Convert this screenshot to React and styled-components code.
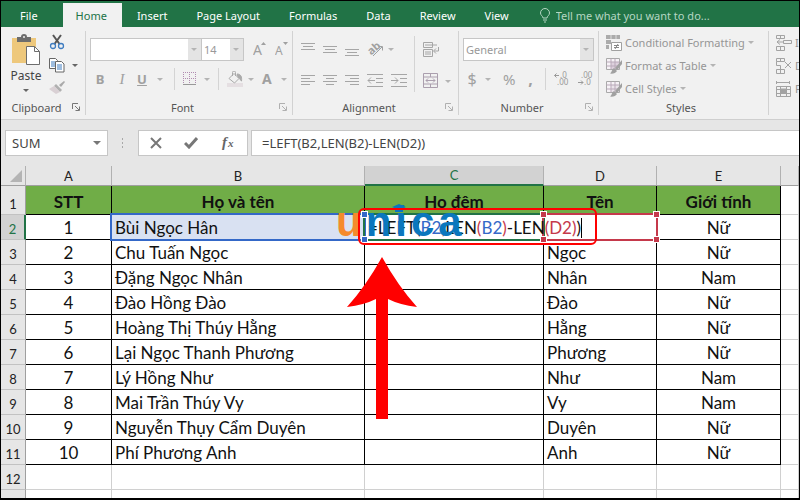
import React from 'react'
import styled, { createGlobalStyle, css } from 'styled-components'

const GlobalStyle = createGlobalStyle`
  * {
    box-sizing: border-box;
  }
  body {
    margin: 0;
  }
`;

const uiFont = `'Noto Sans', 'Open Sans', sans-serif`;
const cellFont = `Lato, 'Open Sans', sans-serif`;

const Frame = styled.div`
  height: 100vh;
  display: flex;
  flex-direction: column;
  overflow: hidden;
  border: 1px solid #000;
  border-bottom-width: 2px;
  background: #e6e6e6;
  font-family: ${uiFont};
  font-size: 11px;
  color: #444;

  button, input, select {
    font: inherit;
    color: inherit;
    margin: 0;
    padding: 0;
    border: none;
    background: none;
  }
  svg {
    display: block;
  }
`;

const TabBar = styled.nav`
  display: flex;
  align-items: flex-end;
  flex: none;
  height: 26px;
  background: #217346;
  white-space: nowrap;
  overflow: hidden;
`;

const Tab = styled.button`
  && {
    height: 24px;
    padding: ${p => p.$pad || '0 14px 0 15px'};
    color: ${p => (p.$active ? '#217346' : '#fff')};
    background: ${p => (p.$active ? '#f1f1f1' : 'transparent')};
  }
`;

const TellMe = styled.label`
  display: flex;
  align-items: center;
  gap: 5px;
  flex: 1;
  height: 24px;
  margin-left: 16px;
  color: #b5d6c3;

  input {
    flex: 1;
    min-width: 0;
  }
  input::placeholder {
    color: #b5d6c3;
    opacity: 1;
  }
`;

const Ribbon = styled.div`
  display: flex;
  flex: none;
  height: 93px;
  background: #f1f1f1;
  border-bottom: 1px solid #cfcfcf;
  overflow: hidden;
`;

const Group = styled.section`
  display: flex;
  flex-direction: column;
  flex: none;
  width: ${p => p.$width};
  margin: 4px 0;
  border-right: 1px solid #d2d2d2;
`;

const GroupBody = styled.div`
  flex: 1;
  display: flex;
  flex-direction: ${p => (p.$row ? 'row' : 'column')};
  gap: ${p => p.$gap || '0'};
  padding: ${p => p.$pad || '0'};
`;

const GroupFooter = styled.div`
  display: flex;
  align-items: center;
  height: 16px;
  padding-right: 5px;
  color: #555;

  span {
    flex: 1;
    text-align: center;
  }
`;

const Tools = styled.div`
  display: flex;
  align-items: center;
  gap: ${p => p.$gap || '8px'};
  height: ${p => p.$height || '24px'};
  color: #a6a6a6;
`;

const ToolButton = styled.button`
  && {
    display: flex;
    align-items: center;
    justify-content: center;
    gap: ${p => p.$gap || '5px'};
    flex: none;
    width: ${p => p.$width || 'auto'};
    color: #a0a0a0;
    white-space: nowrap;
  }
`;

const Letter = styled.span`
  min-width: ${p => p.$min || '0'};
  font-family: ${p => (p.$italic ? `'Liberation Serif', serif` : uiFont)};
  font-size: ${p => p.$size || '13px'};
  line-height: 18px;
  font-weight: ${p => (p.$bold ? 700 : 400)};
  font-style: ${p => (p.$italic ? 'italic' : 'normal')};
  text-decoration: ${p => (p.$underline ? 'underline' : 'none')};
`;

const Separator = styled.i`
  width: 1px;
  height: ${p => p.$height || '22px'};
  background: #d4d4d4;
`;

const Caret = styled.i`
  flex: none;
  border: solid transparent;
  border-width: 3px 3px 0;
  border-top-color: ${p => p.$color || '#b4b4b4'};
`;

const BigCaret = styled(Caret)`
  border-width: 4px 4px 0;
`;

const SelectBox = styled.span`
  position: relative;
  display: flex;
  width: ${p => p.$width};
  height: 23px;
  border: 1px solid #c6c6c6;
  background: #fff;

  & + & {
    margin-left: -1px;
  }
  && select {
    flex: 1;
    min-width: 0;
    appearance: none;
    padding: 0 16px 0 2px;
    color: #999;
    background: linear-gradient(#e4e4e4, #e4e4e4) right / 13px 100% no-repeat;
  }
  ${Caret} {
    position: absolute;
    right: 4px;
    top: 9px;
  }
`;

const FontSizeTools = styled.div`
  display: flex;
  gap: 8px;
  padding-left: 9px;
`;

const PasteButton = styled.button`
  && {
    display: flex;
    flex-direction: column;
    align-items: center;
    width: 44px;
    font-size: 12px;
    line-height: 16px;
  }
  svg {
    margin-bottom: 3px;
  }
  ${Caret} {
    margin-top: 5px;
  }
`;

const SideTools = styled.div`
  display: flex;
  flex-direction: column;
  align-items: flex-start;
  gap: 8px;
  padding-left: 1px;
`;

const StyleButton = styled.button`
  && {
    display: flex;
    align-items: center;
    gap: 3px;
    height: 23px;
    color: #969696;
    white-space: nowrap;
  }
`;

const FormulaBar = styled.div`
  display: flex;
  flex: none;
  height: 46px;
  padding: 10px 0 10px 4px;
  font-size: 13px;
`;

const whiteBox = css`
  height: 26px;
  background: #fff;
  border: 1px solid #c6c6c6;
`;

const NameBox = styled.label`
  ${whiteBox}
  display: flex;
  align-items: center;
  width: 103px;
  padding: 0 6px;

  input {
    flex: 1;
    min-width: 0;
  }
`;

const Dots = styled.i`
  width: 3px;
  height: 12px;
  margin: 7px 14px 0 13px;
  background: radial-gradient(circle, #a8a8a8 1px, transparent 1px) 0 0 / 3px 4px;
`;

const FormulaButtons = styled.div`
  ${whiteBox}
  display: flex;
  align-items: center;
  justify-content: space-between;
  width: 110px;
  margin-right: 3px;
  padding: 0 11px;
`;

const FormulaInput = styled.input`
  && {
    ${whiteBox}
    flex: 1;
    min-width: 0;
    padding: 0 10px;
    border-right: none;
  }
`;

const SheetArea = styled.div`
  position: relative;
  flex: 1;
  overflow: hidden;
  background: #fff;
`;

const Sheet = styled.table`
  width: 100%;
  table-layout: fixed;
  border-spacing: 0;
  font-family: ${cellFont};
  font-size: 17px;
  line-height: 20px;
  color: #111;
`;

const ColumnHead = styled.th`
  height: 20px;
  padding: 0;
  border-right: 1px solid #b1b1b1;
  border-bottom: ${p => (p.$active ? '2px solid #217346' : '1px solid #9f9f9f')};
  background: ${p => (p.$active ? '#d2d2d2' : '#e6e6e6')};
  color: ${p => (p.$active ? '#217346' : '#222')};
  font-size: 13px;
  font-weight: 400;
  line-height: 16px;
`;

const Corner = styled(ColumnHead)`
  svg {
    margin-left: 9px;
  }
`;

const RowHead = styled.th`
  height: ${p => (p.$tall ? '29px' : '25px')};
  padding: ${p => (p.$tall ? '8px 0 0' : '4px 0 0')};
  border-right: ${p => (p.$active ? '2px solid #217346' : '1px solid #9f9f9f')};
  border-bottom: 1px solid #c2c2c2;
  background: ${p => (p.$active ? '#d2d2d2' : '#e6e6e6')};
  color: ${p => (p.$active ? '#217346' : '#222')};
  font-size: 13px;
  font-weight: 400;
  line-height: 16px;
`;

const TitleCell = styled.td`
  padding: 3px 0 0;
  border-right: 1px solid #000;
  border-bottom: 1px solid #000;
  background: #70ad47;
  font-weight: 700;
  text-align: center;
`;

const Cell = styled.td`
  position: relative;
  padding: 2px 3px 0;
  border-right: 1px solid ${p => (p.$blank ? '#d0d0d0' : '#000')};
  border-bottom: 1px solid ${p => (p.$blank ? '#d0d0d0' : '#000')};
  background: ${p => (p.$marked ? '#d9e1f2' : '#fff')};
  text-align: ${p => (p.$center ? 'center' : 'left')};
  white-space: nowrap;
`;

const Range = styled.span`
  position: absolute;
  inset: -2px;
  z-index: 1;
  border: 2px solid ${p => p.$color};
  pointer-events: none;
`;

const Handle = styled.i`
  position: absolute;
  width: 7px;
  height: 7px;
  border: 1px solid #fff;
  background: ${p => p.$color};
  ${p => (p.$v === 'top' ? 'top: -4px;' : 'bottom: -4px;')}
  ${p => (p.$h === 'left' ? 'left: -4px;' : 'right: -4px;')}
`;

const Formula = styled.span`
  position: absolute;
  left: 3px;
  top: 3px;
  z-index: 2;
  border-right: 1px solid #000;
`;

const Ref = styled.span`
  color: ${p => p.$color};
`;

const Watermark = styled.div`
  position: absolute;
  left: 335px;
  top: 33px;
  z-index: 3;
  display: flex;
  gap: 4px;
  color: #0b77bd;
  font: 700 42px/46px 'Liberation Sans', sans-serif;

  span:first-child {
    color: #f58a2c;
  }
  svg {
    position: absolute;
    left: 53px;
    top: 5px;
  }
`;

const Callout = styled.div`
  position: absolute;
  left: 357px;
  top: 42px;
  z-index: 4;
  width: 239px;
  height: 37px;
  border: 2px solid #f00;
  border-radius: 6px;
`;

const Arrow = styled.svg`
  position: absolute;
  left: 345px;
  top: 91px;
  z-index: 4;
`;

const BLUE = '#3468c8'
const GREEN = '#217346'
const RED = '#c5394b'

const rows = [
  ['1', 'Bùi Ngọc Hân', '', 'Nữ'],
  ['2', 'Chu Tuấn Ngọc', 'Ngọc', 'Nữ'],
  ['3', 'Đặng Ngọc Nhân', 'Nhân', 'Nam'],
  ['4', 'Đào Hồng Đào', 'Đào', 'Nữ'],
  ['5', 'Hoàng Thị Thúy Hằng', 'Hằng', 'Nữ'],
  ['6', 'Lại Ngọc Thanh Phương', 'Phương', 'Nữ'],
  ['7', 'Lý Hồng Như', 'Như', 'Nam'],
  ['8', 'Mai Trần Thúy Vy', 'Vy', 'Nam'],
  ['9', 'Nguyễn Thụy Cẩm Duyên', 'Duyên', 'Nữ'],
  ['10', 'Phí Phương Anh', 'Anh', 'Nữ'],
]

const Lines = ({ d, width = 16 }) => (
  <svg width={width} height="14" fill="none" stroke="#a6a6a6">
    <path d={d} />
  </svg>
)

const Launcher = ({ label, dark }) => (
  <ToolButton aria-label={label}>
    <svg width="8" height="8" fill="none" stroke={dark ? '#777' : '#b0b0b0'}>
      <path d="M.5 6V.5H6M3 3l4 4M7.500 3.500v4h-4" />
    </svg>
  </ToolButton>
)

const PasteIcon = () => (
  <svg width="30" height="31">
    <path d="M1 4h24v25H1z" fill="#eec87c" />
    <path d="M6 3h4a3 3 0 0 1 6 0h4v5H6z" fill="#6d6d6d" />
    <circle cx="13" cy="3" r="1" fill="#f1f1f1" />
    <path d="M15.500 12.500h8l5 5v13h-13z" fill="#fff" stroke="#6d6d6d" />
    <path d="M23.500 12.500v5h5" fill="none" stroke="#6d6d6d" />
  </svg>
)

const CutIcon = () => (
  <svg width="16" height="16" fill="none">
    <path d="M4 1l6.500 9M12 1L5.500 10" stroke="#555" strokeWidth="2" />
    <circle cx="4" cy="12" r="2.500" stroke="#3e7cc0" strokeWidth="1.300" />
    <circle cx="12" cy="12" r="2.500" stroke="#3e7cc0" strokeWidth="1.300" />
  </svg>
)

const CopyIcon = () => (
  <svg width="16" height="15" fill="#fff" stroke="#666">
    <path d="M.5.5h6l2 2v8h-8z" />
    <path d="M2 4h4M2 6h4M2 8h4" stroke="#3e7cc0" />
    <path d="M6.500 3.500h6l2.500 2.500v8H6.500z" />
    <path d="M8 7h5M8 9h5M8 11h5" stroke="#3e7cc0" />
  </svg>
)

const PainterIcon = () => (
  <svg width="16" height="14">
    <path d="M15 0l-5 4 2 2 4-5z" fill="#aaa" />
    <path d="M7 3l6 6-2 2-6-6z" fill="#b0b0b0" />
    <path d="M5 5l6 6-4 2-7-5z" fill="#d9d0d4" />
  </svg>
)

const FontSizeIcon = ({ size, up }) => (
  <svg width="14" height="18" fill="#a0a0a0">
    <text x="0" y="15" fontSize={size}>A</text>
    <path d={up ? 'M8 5l2.500-3L13 5z' : 'M8 2h5l-2.500 3z'} />
  </svg>
)

const BordersIcon = () => (
  <svg width="14" height="14" fill="none" stroke="#b08cb0">
    <path d="M.5 0v13M6.500 0v13M12.500 0v13M0 .5h13M0 6.500h13" strokeDasharray="1 1" />
    <path d="M0 12.500h13" stroke="#999" />
  </svg>
)

const BucketIcon = () => (
  <svg width="16" height="16" fill="none" stroke="#aaa">
    <path d="M0 12h16v4H0z" fill="#e5dfe2" stroke="none" />
    <path d="M2 7.500l5-5 5 5-4.500 4.500zM5.500 5V1.500a1.500 1.500 0 0 1 3 0V5" />
    <path d="M10 3c4 0 5 3 4.500 7-2-1-1-3-3-3z" fill="#aaa" />
  </svg>
)

const OrientationIcon = () => (
  <svg width="18" height="18" fill="none" stroke="#a0a0a0">
    <text x="1" y="13" fill="#a0a0a0" stroke="none" fontSize="11" fontWeight="700" transform="rotate(-42 6 10)">ab</text>
    <path d="M6 16l9-9M11.500 6.500H15.500V10.500" />
  </svg>
)

const WrapIcon = () => (
  <svg width="17" height="16" fill="none" stroke="#a6a6a6">
    <path d="M.5.5h9v5h-9zM2 3h12M.5 7.500h9v7h-9zM2 10h6M2 12h6M15.500 5v4H11M13 6.500L10.500 9l2.500 2.500" />
  </svg>
)

const MergeIcon = () => (
  <svg width="16" height="16" fill="none" stroke="#ab9fae">
    <path d="M.5.500h14v14H.5zM.5 4h14M.5 11h14M7.500.5V4M7.500 11v3.500M3 7.500h9M5 5.500l-2 2 2 2M10 5.500l2 2-2 2" />
  </svg>
)

const ConditionalIcon = () => (
  <svg width="16" height="16">
    <path d="M0 0h14v4H0zM0 5h5v4H0zM0 10h3v4H0z" fill="#ababab" />
    <path d="M5 0v4M10 0v4" stroke="#ddd" />
    <path d="M5.500 7.500h10v8h-10z" fill="#fff" stroke="#a0a0a0" />
    <path d="M8 10.500h5M8 12.500h5M12 9l-3 5" stroke="#888" />
  </svg>
)

const TableIcon = ({ fill }) => (
  <svg width="16" height="16">
    <path d="M.5.5h13v11H.5z" fill="#f6f2f6" stroke="#a9a9a9" />
    <path d="M5 4h8v7H5z" fill={fill} />
    <path d="M.5 4h13M.5 8h13M5 .5v11M9 .5v11" stroke="#b9a9b9" fill="none" />
    <path d="M16 2l-7 8 2 2 5-6z" fill="#a0a0a0" />
    <path d="M8 10l3 3c-1 2-4 3-7 2.500C6 14 6 11 8 10z" fill="#a0a0a0" />
  </svg>
)

const CellsIcon = ({ kind }) => (
  <svg width="16" height="16" fill="none" stroke="#a3a3a3">
    {kind === 'insert' && <path d="M.5.5h8v3h-8zM4.500.5v3M.5 11.500h8v4h-8zM4.500 11.500v4M7.500 5.500h8v3h-8zM7 7H1M4 4.500L1 7l3 2.500" />}
    {kind === 'delete' && <path d="M.5.5h8v3h-8zM4.500.5v3M.5 11.500h8v4h-8zM4.500 11.500v4M.5 3.500v4h4v4M9 4l6 6M15 4l-6 6" />}
    {kind === 'format' && (
      <>
        <path d="M.5 5.500h14v10H.5zM.5 8.500h14M.5 12.500h14M4.500 5.500v10M10.500 5.500v10M.5 0v3M13.500 0v3M1 1.500h12" />
        <path d="M5 8h5v4H5z" fill="#a3a3a3" />
      </>
    )}
  </svg>
)

const DecimalIcon = ({ more }) => (
  <svg width="16" height="18" fill="#999" stroke="#999">
    <text x={more ? 6 : 3} y="8" fontSize="8" stroke="none">{more ? '.0' : '.00'}</text>
    <text x={more ? 3 : 6} y="15" fontSize="8" stroke="none">{more ? '.00' : '.0'}</text>
    <path fill="none" d={more ? 'M5 5.500H.5M2.500 3.500l-2 2 2 2' : 'M0 12.500h5M3 10.500l2 2-2 2'} />
  </svg>
)

const Footer = ({ title, plain, dark }) => (
  <GroupFooter>
    <span>{title}</span>
    {!plain && <Launcher label={title + ' settings'} dark={dark} />}
  </GroupFooter>
)

const Tabs = () => (
  <TabBar>
    <Tab $pad="0 25px 0 19px">File</Tab>
    <Tab $active $pad="0 15px 0 13px">Home</Tab>
    <Tab>Insert</Tab>
    <Tab>Page Layout</Tab>
    <Tab>Formulas</Tab>
    <Tab>Data</Tab>
    <Tab>Review</Tab>
    <Tab>View</Tab>
    <TellMe>
      <svg width="12" height="15" fill="none" stroke="#b5d6c3">
        <path d="M4 10c0-2-2.500-2.500-2.500-5a4.500 4.500 0 0 1 9 0c0 2.500-2.500 3-2.500 5zM4 12h4M5 14h2" />
      </svg>
      <input aria-label="Tell me" placeholder="Tell me what you want to do..." />
    </TellMe>
  </TabBar>
)

const RibbonPanel = () => (
  <Ribbon>
    <Group $width="85px">
      <GroupBody $row $pad="3px 0 0 3px">
        <PasteButton>
          <PasteIcon />
          Paste
          <Caret $color="#666" />
        </PasteButton>
        <SideTools>
          <ToolButton aria-label="Cut"><CutIcon /></ToolButton>
          <ToolButton aria-label="Copy" $gap="7px"><CopyIcon /><Caret $color="#666" /></ToolButton>
          <ToolButton aria-label="Format Painter"><PainterIcon /></ToolButton>
        </SideTools>
      </GroupBody>
      <Footer title="Clipboard" dark />
    </Group>

    <Group $width="207px">
      <GroupBody $pad="6px 0 0 4px">
        <Tools $gap="0">
          <SelectBox $width="112px">
            <select aria-label="Font"><option></option></select>
            <Caret />
          </SelectBox>
          <SelectBox $width="43px">
            <select aria-label="Font size"><option>14</option></select>
            <Caret />
          </SelectBox>
          <FontSizeTools>
            <ToolButton aria-label="Increase font size"><FontSizeIcon size="14" up /></ToolButton>
            <ToolButton aria-label="Decrease font size"><FontSizeIcon size="12" /></ToolButton>
          </FontSizeTools>
        </Tools>
        <Tools $height="36px">
          <Tools $gap="0">
            <ToolButton $width="20px"><Letter $bold>B</Letter></ToolButton>
            <ToolButton $width="24px"><Letter $italic $size="15px">I</Letter></ToolButton>
            <ToolButton $gap="10px" $width="32px"><Letter $bold $underline>U</Letter><Caret /></ToolButton>
          </Tools>
          <Separator />
          <ToolButton aria-label="Borders" $gap="7px"><BordersIcon /><Caret /></ToolButton>
          <Separator />
          <ToolButton aria-label="Fill color"><BucketIcon /><Caret /></ToolButton>
          <ToolButton aria-label="Font color" $gap="9px"><Letter $bold $size="14px">A</Letter><Caret /></ToolButton>
        </Tools>
      </GroupBody>
      <Footer title="Font" />
    </Group>

    <Group $width="166px">
      <GroupBody $row $gap="7px" $pad="0 0 0 8px">
        <div>
          <Tools $height="36px">
            <ToolButton aria-label="Top align"><Lines d="M0 1.500h14M2 4.500h10M0 7.500h14" width={14} /></ToolButton>
            <ToolButton aria-label="Middle align"><Lines d="M0 4.500h14M2 7.500h10M0 10.500h14" width={14} /></ToolButton>
            <ToolButton aria-label="Bottom align"><Lines d="M0 7.500h14M2 10.500h10M0 13.500h14" width={14} /></ToolButton>
            <ToolButton aria-label="Orientation" $gap="3px"><OrientationIcon /><Caret /></ToolButton>
          </Tools>
          <Tools $height="28px">
            <ToolButton aria-label="Align left"><Lines d="M0 1.500h14M0 4.500h9M0 7.500h14M0 10.500h9" width={14} /></ToolButton>
            <ToolButton aria-label="Center"><Lines d="M0 1.500h14M3 4.500h8M0 7.500h14M3 10.500h8" width={14} /></ToolButton>
            <ToolButton aria-label="Align right"><Lines d="M0 1.500h14M5 4.500h9M0 7.500h14M5 10.500h9" width={14} /></ToolButton>
            <ToolButton aria-label="Decrease indent"><Lines d="M0 .5h16M9 4.500h7M9 8.500h7M0 12.500h16M8 6.500H1M4 3.500l-3 3 3 3" /></ToolButton>
            <ToolButton aria-label="Increase indent"><Lines d="M0 .5h16M9 4.500h7M9 8.500h7M0 12.500h16M0 6.500h7M4 3.500l3 3-3 3" /></ToolButton>
          </Tools>
        </div>
        <Tools $height="66px">
          <Separator $height="56px" />
          <div>
            <Tools $height="34px"><ToolButton aria-label="Wrap text"><WrapIcon /></ToolButton></Tools>
            <Tools $height="28px"><ToolButton aria-label="Merge" $gap="6px"><MergeIcon /><Caret /></ToolButton></Tools>
          </div>
        </Tools>
      </GroupBody>
      <Footer title="Alignment" />
    </Group>

    <Group $width="140px">
      <GroupBody $pad="6px 0 0 4px">
        <Tools>
          <SelectBox $width="131px">
            <select aria-label="Number format"><option>General</option></select>
            <Caret />
          </SelectBox>
        </Tools>
        <Tools $height="36px">
          <ToolButton $width="32px" $gap="8px"><Letter $size="16px">$</Letter><Caret /></ToolButton>
          <ToolButton><Letter $size="15px">%</Letter></ToolButton>
          <ToolButton $width="14px" aria-label="Comma style"><Letter $bold $size="16px">,</Letter></ToolButton>
          <Separator />
          <ToolButton aria-label="Increase decimal"><DecimalIcon more /></ToolButton>
          <ToolButton aria-label="Decrease decimal"><DecimalIcon /></ToolButton>
        </Tools>
      </GroupBody>
      <Footer title="Number" />
    </Group>

    <Group $width="170px">
      <GroupBody $pad="0 0 0 7px">
        <StyleButton><ConditionalIcon />Conditional Formatting<Caret /></StyleButton>
        <StyleButton><TableIcon fill="#ddd0dd" />Format as Table<Caret /></StyleButton>
        <StyleButton><TableIcon fill="#ebe4eb" />Cell Styles<Caret /></StyleButton>
      </GroupBody>
      <Footer title="Styles" plain />
    </Group>

    <Group $width="120px">
      <GroupBody $pad="0 0 0 7px">
        <StyleButton><CellsIcon kind="insert" />Insert</StyleButton>
        <StyleButton><CellsIcon kind="delete" />Delete</StyleButton>
        <StyleButton><CellsIcon kind="format" />Format</StyleButton>
      </GroupBody>
    </Group>
  </Ribbon>
)

const FormulaRow = () => (
  <FormulaBar>
    <NameBox>
      <input aria-label="Name box" defaultValue="SUM" />
      <BigCaret $color="#777" />
    </NameBox>
    <Dots />
    <FormulaButtons>
      <ToolButton aria-label="Cancel">
        <svg width="12" height="12" stroke="#777" strokeWidth="2"><path d="M1 1l10 10M11 1L1 11" /></svg>
      </ToolButton>
      <ToolButton aria-label="Enter">
        <svg width="14" height="12" fill="none" stroke="#777" strokeWidth="3"><path d="M1 6l4 4 8-9" /></svg>
      </ToolButton>
      <ToolButton aria-label="Insert function">
        <svg width="16" height="20" fill="#666" fontFamily="Liberation Serif, serif" fontStyle="italic" fontWeight="700">
          <text x="2" y="14" fontSize="15">f</text>
          <text x="8" y="14" fontSize="11">x</text>
        </svg>
      </ToolButton>
    </FormulaButtons>
    <FormulaInput aria-label="Formula" defaultValue="=LEFT(B2,LEN(B2)-LEN(D2))" />
  </FormulaBar>
)

const DataRow = ({ row, index }) => {
  const first = index === 0
  return (
    <tr>
      <RowHead scope="row" $active={first}>{index + 2}</RowHead>
      <Cell $center>{row[0]}</Cell>
      <Cell $marked={first}>
        {row[1]}
        {first && <Range $color={BLUE} />}
      </Cell>
      <Cell>
        {first && (
          <>
            <Range $color={GREEN}>
              <Handle $color={BLUE} $v="top" $h="left" />
              <Handle $color={BLUE} $v="bottom" $h="left" />
            </Range>
            <Formula>
              =LEFT(<Ref $color={BLUE}>B2</Ref>,LEN<Ref $color={RED}>(</Ref><Ref $color={BLUE}>B2</Ref><Ref $color={RED}>)</Ref>-LEN<Ref $color={RED}>(D2)</Ref>)
            </Formula>
          </>
        )}
      </Cell>
      <Cell>
        {row[2]}
        {first && (
          <Range $color={RED}>
            <Handle $color={RED} $v="top" $h="left" />
            <Handle $color={RED} $v="bottom" $h="left" />
            <Handle $color={RED} $v="top" $h="right" />
            <Handle $color={RED} $v="bottom" $h="right" />
          </Range>
        )}
      </Cell>
      <Cell $center>{row[3]}</Cell>
      <Cell $blank />
    </tr>
  )
}

const Grid = () => (
  <SheetArea>
    <Sheet>
      <colgroup>
        <col width="25" />
        <col width="86" />
        <col width="253" />
        <col width="179" />
        <col width="113" />
        <col width="124" />
        <col />
      </colgroup>
      <thead>
        <tr>
          <Corner aria-label="Select all">
            <svg width="12" height="12"><path d="M12 0v12H0z" fill="#b4b4b4" /></svg>
          </Corner>
          {['A', 'B', 'C', 'D', 'E', ''].map(c => (
            <ColumnHead key={c} scope="col" $active={c === 'C'}>{c}</ColumnHead>
          ))}
        </tr>
      </thead>
      <tbody>
        <tr>
          <RowHead scope="row" $tall>1</RowHead>
          {['STT', 'Họ và tên', 'Ho đêm', 'Tên', 'Giới tính'].map(t => (
            <TitleCell key={t}>{t}</TitleCell>
          ))}
          <Cell $blank />
        </tr>
        {rows.map((row, i) => <DataRow key={row[0]} row={row} index={i} />)}
        {[12, 13].map(n => (
          <tr key={n}>
            <RowHead scope="row">{n === 12 ? n : ''}</RowHead>
            {['A', 'B', 'C', 'D', 'E', 'F'].map(c => <Cell key={c} $blank />)}
          </tr>
        ))}
      </tbody>
    </Sheet>
    <Watermark>
      <span>u</span><span>n</span><span>i</span><span>c</span><span>a</span>
      <svg width="20" height="10" fill="#0b77bd">
        <path d="M10 0l7 3-7 3-7-3zM6 4l4 2 4-2v4H6z" />
      </svg>
    </Watermark>
    <Callout />
    <Arrow width="72" height="162" fill="#f00">
      <path d="M36 0Q52 29 71 50Q54 48 42 42V162H30V42Q18 48 1 50Q20 29 36 0z" />
    </Arrow>
  </SheetArea>
)

const App = () => (
  <Frame>
    <GlobalStyle />
    <Tabs />
    <RibbonPanel />
    <FormulaRow />
    <Grid />
  </Frame>
)

export default App
